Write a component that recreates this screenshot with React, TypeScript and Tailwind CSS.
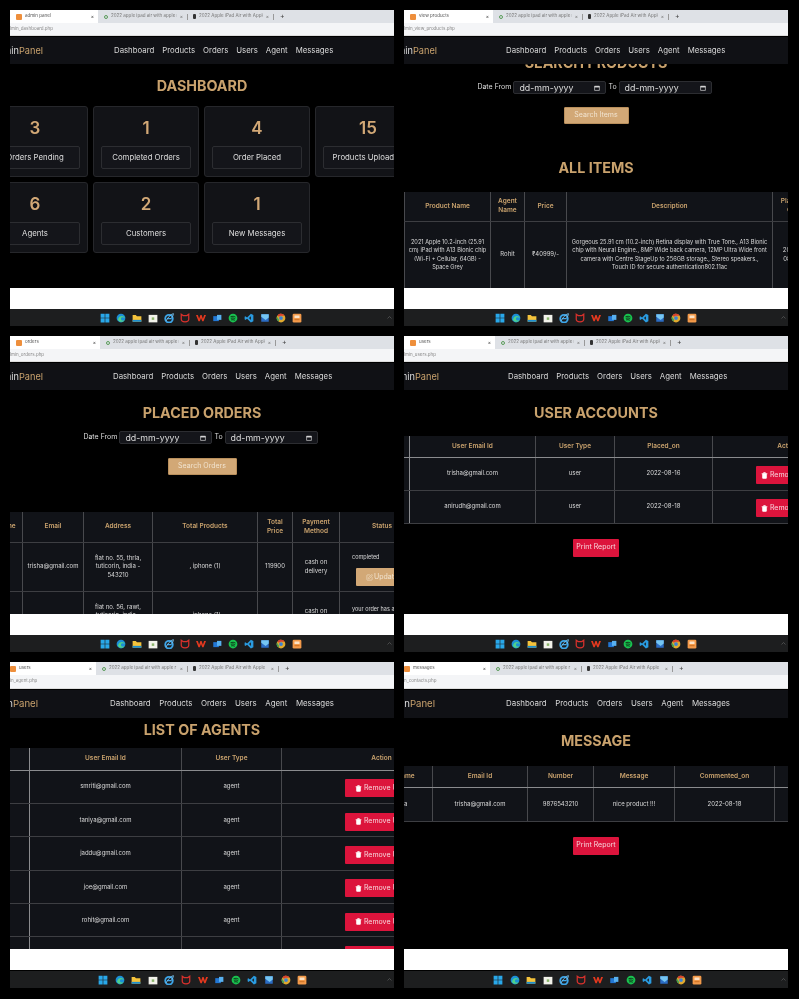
import React from "react";
import { Trash2, SquarePen } from "lucide-react";

const I = ({ children }: { children: React.ReactNode }) => (
  <svg viewBox="0 0 16 16" className="w-[10px] h-[10px] shrink-0">{children}</svg>
);

const taskIcons = [
  <I key="w"><path fill="#29a8ea" d="M1 1h6.500v6.500H1zM8.500 1H15v6.500H8.500zM1 8.500h6.500V15H1zM8.500 8.500H15V15H8.500z" /></I>,
  <I key="e"><circle cx="8" cy="8" r="7" fill="#1b8fd6" /><path fill="#4fd18b" d="M3 11c3 4 9 4 11 0-3 2-6 1-6-2 0-2 3-3 6-1-1-4-9-5-11 3z" /></I>,
  <I key="f"><path fill="#f5c33b" d="M1 3h5l2 2h7v9H1z" /><path fill="#1d8ecf" d="M1 11h14v3H1z" /></I>,
  <I key="s"><path fill="#f2f2ea" d="M1 3h14v12H1z" /><path fill="#8ab56b" d="M6 7h4v4H6z" /></I>,
  <I key="i"><circle cx="8" cy="9" r="6" fill="none" stroke="#3da5e8" strokeWidth="3" /><path fill="#3da5e8" d="M5 8h7v2H5z" /><path fill="none" stroke="#7cc8f5" strokeWidth="1.4" d="M3 13C6 8 10 2 15 1c0 3-2 6-4 8" /></I>,
  <I key="c"><path fill="none" stroke="#d8312c" strokeWidth="2" d="M2 2l3 2h6l3-2v8c0 3-3 4-6 4s-6-1-6-4z" /></I>,
  <I key="x"><path fill="#e5391f" d="M0 3h3l2 6 2-6h2l2 6 2-6h3l-4 10h-2L8 8l-2 5H4z" /></I>,
  <I key="o"><path fill="#2277d4" d="M2 5h9v8H2z" /><path fill="#58b1f0" d="M8 3h7v8H8z" /></I>,
  <I key="g"><circle cx="8" cy="8" r="7" fill="#19c24f" /><path fill="none" stroke="#0b2a14" strokeWidth="1.4" d="M4 6c3-1 6-1 8 .5M4.500 8.500c2.500-.8 5-.6 7 .5M5 11c2-.5 4-.4 6 .5" /></I>,
  <I key="v"><path fill="#2a9be0" d="M11 1l4 2v10l-4 2-6-6-3 2-1-1V6l1-1 3 2zM11 5L8 8l3 3z" /></I>,
  <I key="p"><path fill="#2b6cc4" d="M2 2h12v12H2z" /><path fill="#75c5f2" d="M2 2h12v5L9 11 2 6z" /></I>,
  <I key="h"><circle cx="8" cy="8" r="7" fill="#e0a92e" /><path fill="#d9402f" d="M8 1a7 7 0 0 1 6 3.500H8A3.500 3.500 0 0 0 4.800 6.500L2.500 3.500A7 7 0 0 1 8 1z" /><path fill="#3fa354" d="M1.500 5.500L5 11l-1 2.500A7 7 0 0 1 1.500 5.500z" /><circle cx="8" cy="8" r="3" fill="#3b82d6" /></I>,
  <I key="b"><rect x="1" y="1" width="14" height="14" rx="2" fill="#f39a4a" /><path fill="#fbe2c6" d="M4 4h8v4H4z" /><path fill="#c86c20" d="M4 10h8v1.500H4z" /></I>,
];

const Taskbar = ({ pad, gap }: { pad: string; gap: string }) => (
  <div className={`h-[17px] shrink-0 bg-[#1d1e1f] flex items-center ${pad} ${gap}`}>
    {taskIcons}
    <svg viewBox="0 0 10 6" className="w-[5px] h-[3px] ml-auto mr-[2px] shrink-0"><path d="M1 5l4-4 4 4" stroke="#777" fill="none" /></svg>
  </div>
);

const Chrome = ({ title, url, w, tall, tabPad }: { title: string; url: string; w: string; tall?: boolean; tabPad: string }) => (
  <div className={`${tall ? "h-[27px]" : "h-[26px]"} shrink-0 flex flex-col bg-white`}>
    <div className="h-[13px] shrink-0 bg-[#dee1e6] flex items-center text-[4.500px] text-[#777] whitespace-nowrap">
      <div className={`h-full bg-white ${w} flex items-center ${tabPad} pr-[4px] gap-[3px] text-[#555] shrink-0`}>
        <span className="w-[6px] h-[6px] bg-[#ee8f3c] rounded-[1px] shrink-0"></span>
        <span className="flex-1 min-w-0 overflow-hidden">{title}</span>
        <span className="text-[5px] text-[#444] shrink-0">×</span>
      </div>
      <div className={`${tall ? "w-[91px]" : "w-[89px]"} flex items-center gap-[3px] pl-[6px] pr-[4px] shrink-0`}>
        <span className="w-[4px] h-[4px] rounded-full border border-[#5a9c5a] shrink-0"></span>
        <span className="flex-1 min-w-0 overflow-hidden">2022 apple ipad air with apple r</span>
        <span className="text-[5px] shrink-0">×</span>
      </div>
      <div className="w-px h-[6px] bg-[#999] shrink-0"></div>
      <div className={`${tall ? "w-[90px]" : "w-[85px]"} flex items-center gap-[3px] pl-[5px] pr-[4px] shrink-0`}>
        <span className="w-[3px] h-[5px] bg-[#333] rounded-[1px] shrink-0"></span>
        <span className="flex-1 min-w-0 overflow-hidden">2022 Apple iPad Air with Apple</span>
        <span className="text-[5px] shrink-0">×</span>
      </div>
      <div className="w-px h-[6px] bg-[#999] shrink-0"></div>
      <span className="ml-[6px] text-[7px] text-[#444]">+</span>
    </div>
    <div className="flex-1 bg-[#f4f5f7] flex items-center text-[4.500px] text-[#888] border-b border-[#ddd]">{url}</div>
  </div>
);

const Nav = ({ logoW, gapL, linkGap, size, tall }: { logoW: string; gapL: string; linkGap: string; size: string; tall?: boolean }) => (
  <div className={`${tall ? "h-[28px]" : "h-[27px]"} mt-px shrink-0 bg-[#101115] flex items-center whitespace-nowrap`}>
    <div className={`${logoW} ${gapL} overflow-hidden flex justify-end shrink-0 ${tall ? "text-[9.600px]" : "text-[9.200px]"} text-[#ddd]`}>
      <span className="shrink-0">Admin<span className="text-[#c9a26d]">Panel</span></span>
    </div>
    <div className={`flex ${linkGap} ${size} text-[#d8d8d8]`}>
      <span>Dashboard</span><span>Products</span><span>Orders</span><span>Users</span><span>Agent</span><span>Messages</span>
    </div>
  </div>
);

const Title = ({ children, cls = "" }: { children: React.ReactNode; cls?: string }) => (
  <h1 className={`h-[22px] shrink-0 leading-[22px] text-[14.300px] font-bold text-[#c9a26d] text-center whitespace-nowrap ${cls}`}>{children}</h1>
);

const DateBox = () => (
  <div className="w-[93px] h-[13px] bg-[#14151a] border border-[#2c2d31] rounded-[2px] flex items-center justify-between pl-[5px] pr-[5px] text-[8.800px] text-[#ddd]">
    <span>dd-mm-yyyy</span>
    <svg viewBox="0 0 10 10" className="w-[6px] h-[6px]"><path d="M1 2h8v7H1z" fill="none" stroke="#eee" /><path d="M1 2h8v2H1z" fill="#eee" /></svg>
  </div>
);

const DateForm = () => (
  <div className="flex items-center gap-[2px] mt-[7px] mr-[3px] h-[13px] text-[7px] text-[#ddd] shrink-0">
    <span>Date From</span><DateBox /><span>To</span><DateBox />
  </div>
);

const Gold = ({ children, w, mt }: { children: React.ReactNode; w: string; mt: string }) => (
  <div className={`${w} ${mt} h-[17px] shrink-0 rounded-[1px] bg-[#d2a876] border border-[#b98f5c] flex items-center justify-center text-[7px] text-[#f1e3cf]`}>{children}</div>
);

const Red = ({ children, w }: { children: React.ReactNode; w: string }) => (
  <div className={`${w} h-[18px] flex items-center justify-center gap-[2px] rounded-[1px] bg-[#dc143c] text-[7px] text-[#f6d6dc] whitespace-nowrap mx-auto overflow-hidden`}>{children}</div>
);

const PrintReport = () => (
  <div className="mt-[15px] shrink-0"><Red w="w-[46px]">Print Report</Red></div>
);

const Remove = ({ w }: { w: string }) => (
  <div className="pt-[3px]">
    <Red w={w}><Trash2 className="w-[7px] h-[7px] text-white shrink-0" fill="white" />Remove User</Red>
  </div>
);

type TableProps = {
  cols: string[];
  width: string;
  head: React.ReactNode[];
  rows: React.ReactNode[][];
  headH: string;
  rowH: string;
  mt: string;
  headLine?: string;
  firstLine?: string;
};

const DataTable = ({ cols, width, head, rows, headH, rowH, mt, headLine = "border-b-[#3d3e42]", firstLine = "border-r-[#48494d]" }: TableProps) => (
  <div className={`w-full overflow-hidden shrink-0 ${mt}`}>
    <table className={`table-fixed border-collapse bg-[#111318] ${width}`}>
      <colgroup>{cols.map((c, i) => <col key={i} className={c} />)}</colgroup>
      <thead>
        <tr>
          {head.map((h, i) => (
            <th key={i} className={`${headH} border-x border-b border-x-[#48494d] ${i === 0 ? firstLine : ""} ${headLine} text-[6.500px] leading-[9px] font-semibold text-[#c9a26d] text-center p-0`}>{h}</th>
          ))}
        </tr>
      </thead>
      <tbody>
        {rows.map((r, i) => (
          <tr key={i}>
            {r.map((c, j) => (
              <td key={j} className={`${rowH} border border-x-[#48494d] ${j === 0 ? firstLine : ""} border-y-[#3d3e42] text-[6px] leading-[8.500px] text-[#d8d8d8] text-center p-0 align-middle`}>{c}</td>
            ))}
          </tr>
        ))}
      </tbody>
    </table>
  </div>
);

const Shot = ({ title, url, tabW, tabPad, children, navLogo, navGap, linkGap, navSize, pad, tGap, contentH, tall }: {
  title: string; url: string; tabW: string; tabPad: string; children: React.ReactNode; navLogo: string; navGap: string; linkGap: string; navSize: string; pad: string; tGap: string; contentH: string; tall?: boolean;
}) => (
  <section className="flex flex-col w-[384px] overflow-hidden">
    <Chrome title={title} url={url} w={tabW} tall={tall} tabPad={tabPad} />
    <Nav logoW={navLogo} gapL={navGap} linkGap={linkGap} size={navSize} tall={tall} />
    <div className={`${contentH} overflow-hidden flex flex-col items-center shrink-0`}>{children}</div>
    <div className={`h-[21px] bg-white shrink-0 ${tall ? "mb-px" : ""}`}></div>
    <Taskbar pad={pad} gap={tGap} />
  </section>
);

const Card = ({ n, label }: { n: string; label: string }) => (
  <div className="h-[71px] bg-[#121317] border border-[#26272b] rounded-[3px] flex flex-col items-center pt-[9px]">
    <div className="h-[24px] leading-[24px] text-[17px] font-semibold text-[#d2a876]">{n}</div>
    <div className="mt-[6px] w-[90px] h-[23px] bg-[#14151a] border border-[#2c2d31] rounded-[2px] flex items-center justify-center text-[7.800px] text-[#ddd] whitespace-nowrap">{label}</div>
  </div>
);

export default function App() {
  return (
    <div className="w-[799px] h-[999px] bg-black overflow-hidden pl-[10px] pt-[10px] font-['Inter',sans-serif] blur-[0.35px]">
      <div className="grid grid-cols-[384px_384px] gap-x-[10px] gap-y-[10px]">
        <Shot title="admin panel" url="lmin_dashboard.php" tabW="w-[88px]" tabPad="pl-[6px]" navLogo="w-[33px]" navGap="mr-[71px]" linkGap="gap-[8px]" navSize="text-[7.800px]" pad="pl-[90px]" tGap="gap-[6px]" contentH="h-[224px]">
          <Title cls="mt-[11px]">DASHBOARD</Title>
          <div className="self-start -ml-[28px] mt-[9px] grid grid-cols-[106px_106px_106px_106px] gap-[5px] shrink-0">
            <Card n="3" label="Orders Pending" />
            <Card n="1" label="Completed Orders" />
            <Card n="4" label="Order Placed" />
            <Card n="15" label="Products Uploaded" />
            <Card n="6" label="Agents" />
            <Card n="2" label="Customers" />
            <Card n="1" label="New Messages" />
          </div>
        </Shot>

        <Shot title="view products" url="lmin_view_products.php" tabW="w-[89px]" tabPad="pl-[6px]" navLogo="w-[33px]" navGap="mr-[69px]" linkGap="gap-[8px]" navSize="text-[7.800px]" pad="pl-[91px]" tGap="gap-[6px]" contentH="h-[224px]">
          <Title cls="-mt-[12px]">SEARCH PRODUCTS</Title>
          <DateForm />
          <Gold w="w-[65px]" mt="mt-[13px]">Search Items</Gold>
          <Title cls="mt-[33px]">ALL ITEMS</Title>
          <DataTable
            mt="mt-[13px]"
            width="w-[406px]"
            cols={["w-[86px]", "w-[34px]", "w-[42px]", "w-[206px]", "w-[38px]"]}
            headH="h-[29px]"
            rowH="h-[67px]"
            head={["Product Name", <>Agent<br />Name</>, "Price", "Description", <>Placed<br />On</>]}
            rows={[[
              <span className="block whitespace-nowrap text-[5.600px]">2021 Apple 10.2-inch (25.91<br />cm) iPad with A13 Bionic chip<br />(Wi-Fi + Cellular, 64GB) -<br />Space Grey</span>,
              "Rohit",
              "₹40999/-",
              <span className="block whitespace-nowrap text-[5.700px]">Gorgeous 25.91 cm (10.2-inch) Retina display with True Tone., A13 Bionic<br />chip with Neural Engine., 8MP Wide back camera, 12MP Ultra Wide front<br />camera with Centre StageUp to 256GB storage., Stereo speakers.,<br />Touch ID for secure authentication802.11ac</span>,
              <>2022-<br />08-18</>,
            ]]}
          />
        </Shot>

        <Shot title="orders" url="lmin_orders.php" tabW="w-[90px]" tabPad="pl-[6px]" navLogo="w-[33px]" navGap="mr-[70px]" linkGap="gap-[8px]" navSize="text-[7.800px]" pad="pl-[90px]" tGap="gap-[6px]" contentH="h-[224px]">
          <Title cls="mt-[12px]">PLACED ORDERS</Title>
          <DateForm />
          <Gold w="w-[69px]" mt="mt-[14px]">Search Orders</Gold>
          <div className="w-[404px] mt-[37px] -ml-[20px] self-start shrink-0">
            <DataTable
              mt="mt-0"
              width="w-[434px]"
              cols={["w-[32px]", "w-[61px]", "w-[69px]", "w-[105px]", "w-[35px]", "w-[47px]", "w-[85px]"]}
              headH="h-[30px]"
              rowH="h-[49px]"
              head={["Name", "Email", "Address", "Total Products", <>Total<br />Price</>, <>Payment<br />Method</>, "Status"]}
              rows={[
                [<span className="pr-[8px]">trisha</span>, "trisha@gmail.com", <>flat no. 55, thrla,<br />tuticorin, india -<br />543210</>, ", iphone (1)", "119900", <>cash on<br />delivery</>,
                  <div className="flex flex-col items-start pl-[12px] pt-[6px]">
                    <span className="text-[5.500px]">completed</span>
                    <span className="mt-[7px] ml-[4px] w-[70px] h-[18px] shrink-0 bg-[#d2a876] rounded-[1px] flex items-center pl-[10px] gap-[1px] text-[7px] text-[#f1e3cf]"><SquarePen className="w-[7px] h-[7px]" />Update</span>
                  </div>],
                ["", "", <>flat no. 56, rawt,<br />tuticorin, india -<br />543210</>, ", iphone (1)", "", <>cash on<br />delivery</>,
                  <div className="flex flex-col items-start pl-[12px] pb-[12px] whitespace-nowrap text-[5.500px]">your order has already</div>],
              ]}
            />
          </div>
        </Shot>

        <Shot title="users" url="lmin_users.php" tabW="w-[91px]" tabPad="pl-[6px]" navLogo="w-[35px]" navGap="mr-[69px]" linkGap="gap-[8px]" navSize="text-[7.800px]" pad="pl-[91px]" tGap="gap-[6px]" contentH="h-[224px]">
          <Title cls="mt-[12px]">USER ACCOUNTS</Title>
          <div className="self-start -ml-[35px] w-[419px] shrink-0">
            <DataTable
              mt="mt-[12px]"
              width="w-[493px]"
              cols={["w-[40px]", "w-[126px]", "w-[79px]", "w-[98px]", "w-[150px]"]}
              headH="h-[21px]"
              rowH="h-[33px]"
              headLine="border-b-[#8a8b8e]"
              firstLine="border-r-[#8a8b8e]"
              head={["", "User Email Id", "User Type", "Placed_on", "Action"]}
              rows={[
                ["", "trisha@gmail.com", "user", "2022-08-16", <Remove w="w-[64px]" />],
                ["", "anirudh@gmail.com", "user", "2022-08-18", <Remove w="w-[64px]" />],
              ]}
            />
          </div>
          <PrintReport />
        </Shot>

        <Shot tall title="users" url="in_agent.php" tabW="w-[86px]" tabPad="pl-0" navLogo="w-[28px]" navGap="mr-[72px]" linkGap="gap-[8.500px]" navSize="text-[7.900px]" pad="pl-[88px]" tGap="gap-[6.600px]" contentH="h-[231px]">
          <Title cls="mt-px">LIST OF AGENTS</Title>
          <div className="self-start -ml-[21px] w-[405px] shrink-0">
            <DataTable
              mt="mt-[7px]"
              width="w-[492px]"
              cols={["w-[40px]", "w-[152px]", "w-[100px]", "w-[200px]"]}
              headH="h-[22px]"
              rowH="h-[33.400px]"
              headLine="border-b-[#8a8b8e]"
              firstLine="border-r-[#8a8b8e]"
              head={["", "User Email Id", "User Type", "Action"]}
              rows={["smriti", "taniya", "jaddu", "joe", "rohit", "anu"].map((n) => ["", `${n}@gmail.com`, "agent", <Remove w="w-[74px]" />])}
            />
          </div>
        </Shot>

        <Shot tall title="messages" url="n_contacts.php" tabW="w-[86px]" tabPad="pl-0" navLogo="w-[31px]" navGap="mr-[71px]" linkGap="gap-[8.500px]" navSize="text-[7.900px]" pad="pl-[89px]" tGap="gap-[6.600px]" contentH="h-[231px]">
          <Title cls="mt-[12px]">MESSAGE</Title>
          <div className="self-start -ml-[26px] w-[410px] shrink-0">
            <DataTable
              mt="mt-[14px]"
              width="w-[456px]"
              cols={["w-[54px]", "w-[95px]", "w-[66px]", "w-[81px]", "w-[100px]", "w-[60px]"]}
              headH="h-[21px]"
              rowH="h-[34px]"
              headLine="border-b-[#8a8b8e]"
              head={["Name", "Email Id", "Number", "Message", "Commented_on", ""]}
              rows={[[<span className="pr-[12px]">trisha</span>, "trisha@gmail.com", "9876543210", "nice product !!!", "2022-08-18", ""]]}
            />
          </div>
          <PrintReport />
        </Shot>
      </div>
    </div>
  );
}
